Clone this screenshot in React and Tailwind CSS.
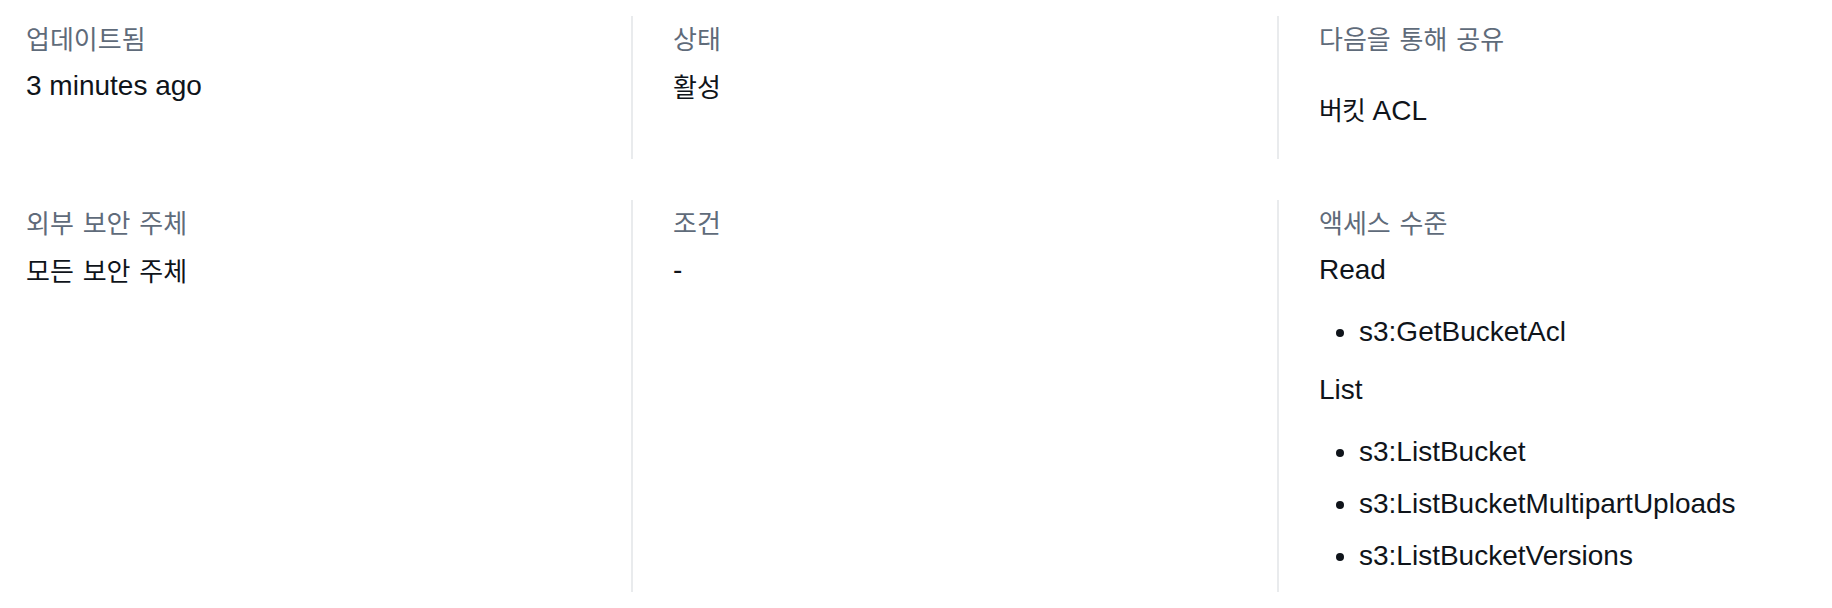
import React from "react";

const LATIN = "font-['Liberation_Sans','Noto_Sans_CJK_KR',sans-serif] text-[28px] leading-[44px]";
const KO = "font-['Noto_Sans_CJK_KR',sans-serif] text-[26px] leading-[44px] tracking-normal [word-spacing:3px]";

function Label({ children }) {
  return <div className={`${KO} text-[#5f6b7a]`}>{children}</div>;
}

function KoValue({ children, className = "" }) {
  return <div className={`${KO} text-[#0f141a] mt-1 ${className}`}>{children}</div>;
}

function LatinValue({ children, className = "" }) {
  return <div className={`${LATIN} text-[#0f141a] ${className}`}>{children}</div>;
}

function Bullets({ items, className = "" }) {
  return (
    <ul className={`list-disc pl-[40px] space-y-2 ${LATIN} text-[#0f141a] ${className}`}>
      {items.map((it) => (
        <li key={it}>{it}</li>
      ))}
    </ul>
  );
}

export default function App() {
  return (
    <div className="w-[1832px] h-[608px] overflow-hidden bg-white pt-4">
      <div className="grid grid-cols-[631px_646px_1fr] gap-y-[41px]">
        {/* Row 1 */}
        <div className="pl-[26px]">
          <Label>업데이트됨</Label>
          <LatinValue className="mt-1">3 minutes ago</LatinValue>
        </div>
        <div className="border-l-2 border-[#e9ebed] pl-[40px]">
          <Label>상태</Label>
          <KoValue>활성</KoValue>
        </div>
        <div className="border-l-2 border-[#e9ebed] pl-[40px] pb-[26px]">
          <Label>다음을 통해 공유</Label>
          <div className={`${LATIN} text-[#0f141a] mt-1 pt-[25px]`}>
            <span className="font-['Noto_Sans_CJK_KR',sans-serif] text-[26px] leading-none tracking-[-1px]">버킷</span> ACL
          </div>
        </div>

        {/* Row 2 */}
        <div className="pl-[26px]">
          <Label>외부 보안 주체</Label>
          <KoValue>모든 보안 주체</KoValue>
        </div>
        <div className="border-l-2 border-[#e9ebed] pl-[40px]">
          <Label>조건</Label>
          <LatinValue className="mt-1">-</LatinValue>
        </div>
        <div className="border-l-2 border-[#e9ebed] pl-[40px] pb-[14px]">
          <Label>액세스 수준</Label>
          <LatinValue className="mt-1">Read</LatinValue>
          <Bullets items={["s3:GetBucketAcl"]} className="mt-[18px] mb-[14px]" />
          <LatinValue>List</LatinValue>
          <Bullets
            items={["s3:ListBucket", "s3:ListBucketMultipartUploads", "s3:ListBucketVersions"]}
            className="mt-[18px]"
          />
        </div>
      </div>
    </div>
  );
}
